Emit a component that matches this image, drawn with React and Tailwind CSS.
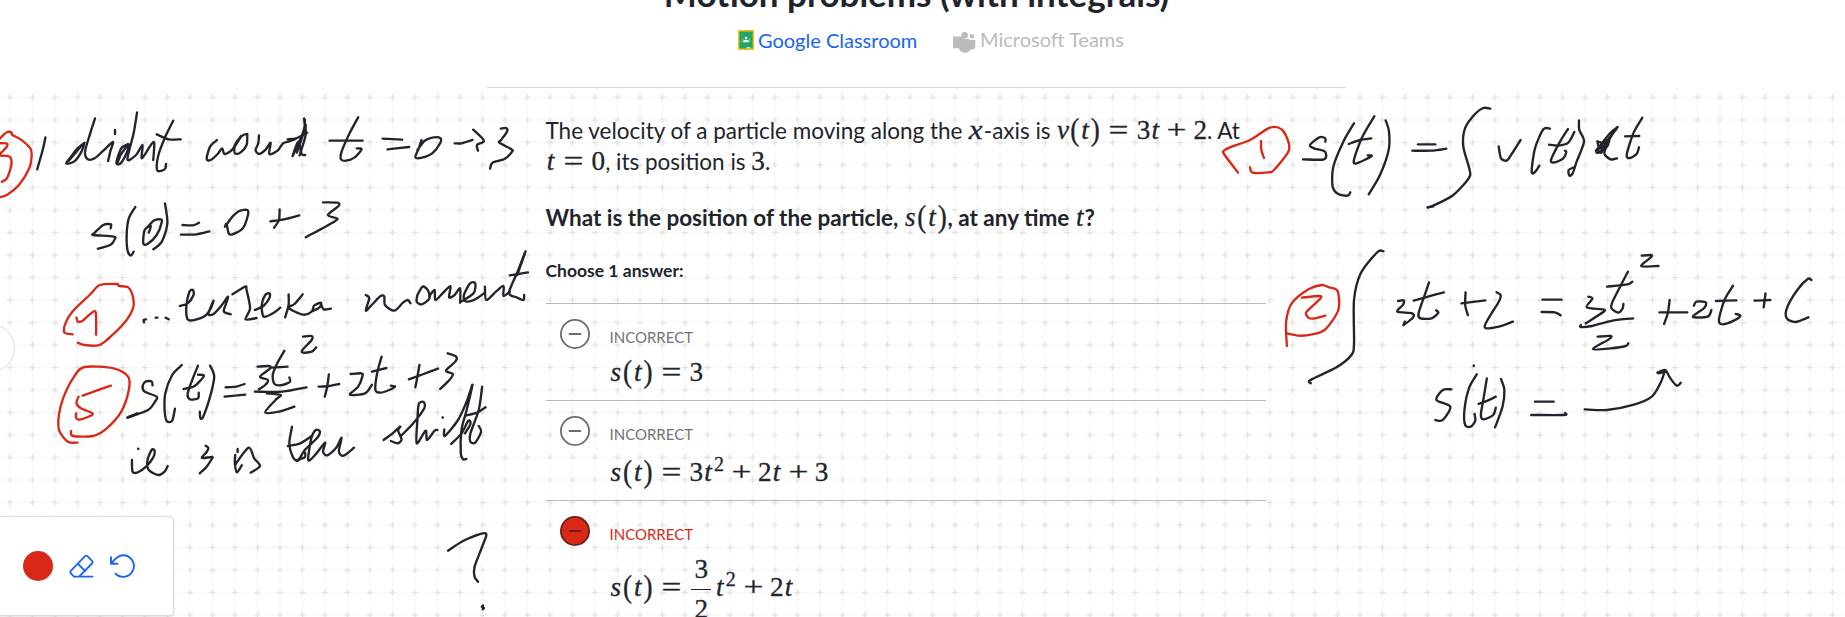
const INK = "#21242c";
const RED = "#d92916";

/* Each sheet holds pen strokes; a stroke is a list of sampled pen points. */
const SHEETS = [
  {
    transform: "translate(0 80) scale(0.34439 0.33333)",
    red: [
      "-8,185 0,175 20,157 33,157 36,165 60,178 88,205 92,225 85,265 55,315 20,345 -4,352",
      "-4,190 18,190 20,200 -2,224",
      "-4,227 28,230 33,255 20,295 5,305",
    ],
    ink: [
      "132,172 124,210 108,268",
      "246,188 225,205 208,228 192,250 215,245 235,218 244,190 222,215 200,242",
      "276,115 262,160 247,215 255,238 275,235 300,212 328,186 320,215 314,243",
      "334,150 334,162",
      "372,192 352,205 338,248 350,250 368,218 374,193 352,222 342,246",
      "398,97 388,160 370,238 395,225 414,195 412,235 440,192 448,190 445,240",
      "503,122 480,170 460,225 456,270 470,272 480,265 482,252",
      "455,163 490,178 525,178",
      "630,180 610,200 600,237 612,240 632,222 645,205 652,222 675,208 702,168 718,162",
      "700,168 682,195 682,220 698,218 716,195 718,163",
      "752,166 750,190 742,210 752,222 772,208 786,188 782,222 806,212 822,190 840,184 856,178",
      "883,115 888,160 878,200 870,226",
      "835,178 860,175 892,158",
      "885,118 882,150 850,228 866,185 876,222 886,225",
      "888,135 878,170 862,218",
      "1040,112 1015,160 992,215 990,238 1005,242 1030,232 1050,208 1036,205",
      "957,182 1053,182",
      "1111,176 1168,179",
      "1125,208 1188,201",
      "1224,180 1216,205 1206,232 1225,233 1255,220 1278,190 1278,174 1255,173 1232,183 1212,210",
      "1320,190 1340,190 1372,180",
      "1374,149 1405,182 1385,195 1388,212",
      "1454,146 1470,144 1472,155 1455,180 1450,188 1485,208 1487,215 1465,237 1430,248 1423,266",
      "321,445 322,433 300,435 273,460 272,465 330,470 333,478 320,495 284,506",
      "393,381 374,415 368,460 370,510 380,527 388,515",
      "432,458 438,438 420,450 416,490 428,492 455,465 470,425 465,418 446,422 428,442",
      "479,370 486,430 470,485 445,508",
      "530,435 560,436 578,428",
      "525,464 570,463 608,454",
      "653,440 658,432 664,460 675,463 705,445 720,405 718,390 695,393 675,410 658,434",
      "785,424 825,418 869,406",
      "812,388 810,420 796,443",
      "938,367 980,368 983,378 952,405 978,415 970,425 888,472",
    ],
  },
  {
    transform: "translate(0 240) scale(0.34439 0.33333)",
    red: [
      "211,283 187,278 190,250 210,215 260,165 290,135 340,132 345,138 372,142 386,170 386,205 360,250 310,300 285,316 245,315 226,308",
      "222,233 226,245 240,242 262,222 278,217 279,284",
      "225,608 197,605 172,572 171,525 185,470 215,410 245,381 330,385 372,410 374,450 352,515 310,565 270,588 212,588 206,573",
      "322,437 280,452 240,467",
      "228,470 222,490 235,505 266,518 266,526 232,539 221,534 221,520",
    ],
    ink: [
      "418,247 417,240 424,238",
      "452,233 457,233",
      "481,233 490,238",
      "522,198 545,190 562,165 560,150 550,155 541,200 545,238 565,240 595,228 612,205 620,182 605,222 620,222 642,198 662,170 655,195 650,215 670,223",
      "675,163 712,140 716,150 726,205 713,238 745,234",
      "740,210 765,198 782,175 783,160 770,165 760,195 766,230 795,218 814,203",
      "838,163 838,195 828,232",
      "879,163 855,192 838,204 880,224 905,215 912,197 932,188 928,202 906,214",
      "932,192 940,208 961,206",
      "1062,165 1072,175 1062,212 1082,192 1105,168 1116,170 1118,195 1145,212 1170,188 1184,180 1192,190",
      "1212,165 1210,185 1225,193 1247,175 1242,150 1227,140 1212,165",
      "1247,168 1262,150 1264,180 1285,160 1308,138 1304,172 1320,165 1336,145 1336,188",
      "1340,184 1375,160 1380,130 1365,130 1347,165 1352,184 1380,178 1408,158",
      "1408,140 1412,180 1440,155 1462,138 1462,168 1480,155",
      "1526,34 1505,90 1478,158 1500,172 1520,180 1522,165",
      "1524,40 1512,75 1502,105",
      "1480,106 1533,97",
      "880,290 905,288 905,300 878,330 880,338 905,335 918,322",
      "443,436 440,424 422,425 414,440 420,455 455,470 450,485 430,510 370,533",
      "398,520 384,527 370,533",
      "396,522 372,531",
      "528,375 500,405 480,460 478,510 484,543 500,542 508,506",
      "575,377 560,415 545,460 552,478 575,475 577,458",
      "533,447 565,438 592,408 575,404",
      "610,377 622,410 610,470 590,530 582,535 580,515",
      "655,442 685,440 710,432",
      "652,470 712,464",
      "748,380 780,378 785,385 755,410 778,420 770,435 752,448",
      "826,332 805,370 792,405 797,432 820,435 842,425 840,412",
      "790,383 835,380",
      "740,455 820,455 890,442",
      "775,460 815,465 800,480 770,517 810,515 855,500",
      "955,403 950,440 943,470",
      "925,440 955,438 985,432",
      "1018,402 1050,400 1052,410 1040,440 1016,464 1060,460 1080,434",
      "1108,350 1095,400 1090,450 1105,458 1130,450 1147,440 1135,437",
      "1080,395 1122,384",
      "1218,375 1212,410 1206,442",
      "1187,418 1230,402 1272,386",
      "1300,340 1325,350 1322,365 1295,392 1315,402 1305,420 1278,447",
    ],
  },
  {
    transform: "translate(0 400) scale(0.34439 0.33333)",
    red: [],
    ink: [
      "383,180 385,215 400,217 424,200 445,172 449,152 440,150 428,182 432,210 460,225 478,215 487,198",
      "401,146 402,147",
      "597,137 605,144 600,156 586,174 616,171 613,180 600,200 580,220",
      "690,147 690,156",
      "683,165 682,190 688,217 702,196",
      "684,192 722,143 738,175 755,198 728,218",
      "848,80 840,130 850,170 865,182 885,150 920,115 929,95 917,90 904,115 895,180 915,165 944,128 938,155 950,166 975,145 992,113 984,155 998,167 1028,143",
      "836,138 870,131 905,108",
      "862,180 885,172 886,158",
      "1114,120 1140,100 1162,80 1156,92 1166,118 1155,130 1135,123",
      "1166,106 1200,70 1232,25 1230,6 1216,12 1212,60 1210,130 1236,92 1240,120 1262,92 1270,90",
      "1285,52 1286,53",
      "1290,88 1292,108 1330,60 1355,5 1372,-46 1355,30 1340,90 1338,160 1345,178 1354,177",
      "1310,132 1340,100 1360,62 1366,72 1350,100",
      "1400,-40 1390,30 1366,100 1366,125 1380,128 1397,95 1390,78",
      "1355,46 1385,38 1410,22",
      "1301,452 1350,420 1410,400 1400,440 1378,500 1378,530 1388,545",
      "1402,616 1402,628",
      "1399,620 1405,624",
    ],
  },
  {
    transform: "translate(1200 80) scale(0.33333)",
    red: [
      "114,278 72,222 72,212 95,200 150,180 210,143 245,148 265,185 265,215 222,270 205,277 158,278 150,262",
      "183,183 184,210 192,234",
    ],
    ink: [
      "376,185 376,175 358,172 330,195 342,205 375,215 372,238 309,238",
      "462,130 430,185 400,260 398,320 415,342 443,347 451,337",
      "523,109 485,175 461,245 480,246 515,228 503,226",
      "446,192 480,180 514,175",
      "557,121 567,155 566,210 540,285 506,343",
      "654,193 706,193",
      "637,212 695,212 739,206",
      "871,86 850,84 825,102 795,145 790,200 809,270 806,295 760,345 700,377 683,382",
      "700,379 683,382",
      "896,199 903,235 920,242 930,230 962,180",
      "1050,146 1030,148 1005,205 995,275 1005,276 1018,257",
      "1104,147 1080,185 1053,240 1065,247 1090,235 1099,216 1095,212",
      "1047,194 1075,197 1105,188 1123,156",
      "1137,121 1138,150 1152,185 1130,245 1118,280 1108,287 1106,270 1122,262",
      "1253,141 1230,160 1190,212 1200,216 1225,185 1213,220 1232,238 1251,235",
      "1250,146 1222,182 1205,217 1195,208 1218,180 1188,212",
      "1192,184 1200,205 1228,182 1208,210",
      "1196,186 1225,192 1212,206 1245,150",
      "1327,113 1300,160 1280,225 1290,234 1310,222 1317,202",
      "1275,169 1318,168",
    ],
  },
  {
    transform: "translate(1260 230) scale(0.37309 0.33333)",
    red: [
      "72,348 70,275 85,220 130,178 165,165 185,172 208,183 210,240 175,298 140,313 105,317 73,310",
      "112,203 160,198 160,208 125,245 127,260 140,266 175,257",
    ],
    ink: [
      "331,64 315,66 270,130 252,210 252,340 245,375 205,412 135,450 136,460",
      "370,213 385,211 383,225 368,245 408,250 410,263 385,285",
      "388,275 385,285",
      "453,157 440,200 425,250 430,265 460,265 478,248 472,241",
      "412,212 450,200 493,187",
      "551,187 550,225 557,255",
      "540,220 604,211",
      "634,187 645,195 640,215 602,290 640,290 678,275",
      "757,209 808,209",
      "755,246 790,247 806,256",
      "880,200 891,206 876,232 920,238 920,246 873,280",
      "986,125 970,160 945,215 942,235 960,248 972,235 974,222",
      "930,170 985,163 998,155",
      "860,285 860,291 890,288 945,272 1000,265",
      "905,320 940,318 935,328 892,357 940,355 980,348 987,340",
      "1023,77 1048,75 1048,82 1022,108 1068,108",
      "1098,210 1093,250 1083,282",
      "1071,247 1145,247",
      "1163,227 1170,215 1195,217 1190,235 1160,260 1200,260 1210,240",
      "1268,167 1245,210 1230,270 1240,283 1270,272 1288,257 1275,252",
      "1222,213 1277,211",
      "1355,190 1350,232",
      "1325,212 1368,210",
      "1478,150 1468,147 1440,180 1412,235 1412,265 1435,276 1470,262",
      "513,478 490,480 473,510 510,530 490,570 470,570",
      "581,433 560,475 548,540 550,585 565,590 577,572 575,552",
      "573,406 573,408",
      "608,445 600,500 592,555 600,568 625,555 632,533",
      "586,522 610,512 632,500",
      "646,447 655,480 650,530 630,592",
      "737,515 787,515",
      "727,555 815,555 818,549",
      "870,538 930,540 1000,525 1050,500 1075,455 1085,422",
      "1065,428 1080,421 1088,422 1100,445 1117,467 1128,458",
      "1068,430 1085,426",
    ],
  },
];

/* Rounds a list of pen points into a smooth Catmull-Rom curve. */
function smooth(points) {
  const p = points.split(" ").map((s) => s.split(",").map(Number));
  const k = 7;
  let d = `M${p[0][0]} ${p[0][1]}`;
  for (let i = 0; i < p.length - 1; i++) {
    const a = p[i - 1] || p[i];
    const b = p[i];
    const c = p[i + 1];
    const e = p[i + 2] || c;
    d += `C${b[0] + (c[0] - a[0]) / k} ${b[1] + (c[1] - a[1]) / k} ${c[0] - (e[0] - b[0]) / k} ${c[1] - (e[1] - b[1]) / k} ${c[0]} ${c[1]}`;
  }
  return d;
}

function Strokes({ list, color }) {
  return list.map((s, i) => (
    <path key={i} d={smooth(s)} stroke={color} vectorEffect="non-scaling-stroke" />
  ));
}

function Whiteboard() {
  return (
    <svg
      className="pointer-events-none absolute inset-0"
      width="1845"
      height="617"
      fill="none"
      strokeWidth="2.35"
      strokeLinecap="round"
      strokeLinejoin="round"
    >
      {SHEETS.map((s, i) => (
        <g key={i} transform={s.transform}>
          <Strokes list={s.ink} color={INK} />
          <Strokes list={s.red} color={RED} />
        </g>
      ))}
    </svg>
  );
}

function Grid() {
  return (
    <svg className="absolute inset-x-0 top-[87px]" width="1845" height="530">
      <defs>
        <pattern id="grid" x="-1.25" y="-0.75" width="22.5" height="22.5" patternUnits="userSpaceOnUse">
          <path d="M0 11.25H22.5M11.25 0V22.5" stroke="#f1f1f1" strokeWidth="1.2" strokeDasharray="1.25 1.25" />
          <path d="M8.25 11.25h6M11.25 8.25v6" stroke="#e4e4e4" strokeWidth="1.6" />
        </pattern>
      </defs>
      <rect width="1845" height="530" fill="url(#grid)" />
    </svg>
  );
}

/* Advance widths of the math glyphs, in em. */
const GLYPHS = {
  s: "w-[0.469em] italic",
  t: "w-[0.361em] italic",
  v: "w-[0.485em] italic",
  x: "w-[0.572em] italic scale-x-115",
  "(": "w-[0.389em] scale-y-115",
  ")": "w-[0.389em] scale-y-115",
  "=": "w-[0.778em] mx-[0.278em] scale-x-130",
  "+": "w-[0.778em] mx-[0.222em] scale-x-130",
};

function Math({ children }) {
  return (
    <span className="inline-flex items-baseline whitespace-nowrap font-['Liberation_Serif',serif] text-[27.2px] leading-[0] font-normal [-webkit-text-stroke:0.3px]">
      {[...children].map((c, i) =>
        c === "²" ? (
          <span key={i} className="relative -top-[10px] w-3 pl-px text-[20px]">2</span>
        ) : c === "½" ? (
          <span key={i} className="relative -top-[17.5px] mr-1 ml-0.5 inline-flex h-[22px] w-[19.5px] flex-col items-center leading-[22px]">
            <span>3</span>
            <span className="mt-[9px] h-px w-full shrink-0 bg-[#21242c]" />
            <span className="mt-2">2</span>
          </span>
        ) : (
          <span key={i} className={`flex shrink-0 justify-center ${GLYPHS[c] || "w-[0.5em]"}`}>{c}</span>
        )
      )}
    </span>
  );
}

function Option({ height, selected, gap, children }) {
  return (
    <li className={`flex shrink-0 border-t border-[#b8b9bd] pl-3.5 ${height}`}>
      <svg className="mt-[15px] mr-5 shrink-0" width="30" height="30" viewBox="0 0 30 30">
        <circle
          cx="15"
          cy="15"
          r="14.1"
          fill={selected ? "#d92916" : "#fff"}
          stroke={selected ? "#6b221e" : "#6b6c72"}
          strokeWidth="1.8"
        />
        <path d="M9.7 15H20.3" stroke={selected ? "#6b221e" : "#6b6c72"} strokeWidth="2.2" strokeLinecap="round" />
      </svg>
      <div className="pt-6">
        <div className={`text-[15px] leading-[18px] ${selected ? "text-[#d92916]" : "text-[#717378]"}`}>INCORRECT</div>
        <div className={`h-[30px] text-[22.5px] leading-[30px] ${gap}`}>
          <Math>{children}</Math>
        </div>
      </div>
    </li>
  );
}

function ClassroomIcon() {
  return (
    <svg width="16" height="20" viewBox="0 0 16 20">
      <rect width="16" height="20" fill="#f6bb17" />
      <rect x="1.4" y="1.6" width="13.2" height="16.8" fill="#23a566" />
      <circle cx="8" cy="8" r="1.2" fill="#fff" />
      <path d="M5 12.2c0-1.600 1.400-2.400 3-2.400s3 .8 3 2.400z" fill="#fff" />
      <path d="M3.400 11.800a1.500 1.200 0 0 1 2.200-1M12.600 11.800a1.500 1.200 0 0 0-2.200-1" stroke="#8fd1b0" fill="none" />
      <circle cx="4.700" cy="9.300" r=".7" fill="#8fd1b0" />
      <circle cx="11.300" cy="9.300" r=".7" fill="#8fd1b0" />
      <rect x="8.600" y="17.200" width="4" height="1.200" fill="#f3f3e2" />
    </svg>
  );
}

function TeamsIcon() {
  return (
    <svg width="23" height="21" viewBox="0 0 23 21" fill="#babbbd">
      <circle cx="11.700" cy="3.300" r="3.300" />
      <circle cx="18.900" cy="4.200" r="2.300" />
      <path d="M0 4.600h9c1 2.800 4.400 3.400 6.200 1.700.5 1.200 1.200 1.700 2.200 1.700H22.300v6.500c0 2.200-2 3.300-4.600 2.900-1.200 2.200-3.200 3.300-5.700 3.300-3 0-5.100-1.500-6.200-4.400H0z" />
    </svg>
  );
}

function Header() {
  return (
    <header className="relative h-[88px] bg-white">
      <div className="ml-[487px] flex h-full w-[859px] flex-col items-center border-b border-[#d5d6d8]">
        <h1 className="-mt-[28px] h-[42px] text-[35px] leading-[42px] font-bold whitespace-nowrap">
          Motion problems (with integrals)
        </h1>
        <div className="mt-[13px] flex w-full text-[20px] leading-6">
          <a className="ml-[251px] flex w-[215px] text-[#1865f2]">
            <span className="mt-[3px] mr-1"><ClassroomIcon /></span>
            <span className="mt-[1px]">Google Classroom</span>
          </a>
          <a className="flex text-[#babbbd]">
            <span className="mt-[5px] mr-1"><TeamsIcon /></span>
            <span>Microsoft Teams</span>
          </a>
        </div>
      </div>
    </header>
  );
}

function Toolbar() {
  return (
    <div className="absolute top-[516px] left-[-6px] flex h-[100px] w-[180px] items-center gap-[15.500px] rounded border border-[#dcdde0] bg-white pl-[28px] shadow-sm">
      <span className="size-[30px] shrink-0 rounded-full bg-[#d92916]" />
      <svg width="25" height="24" viewBox="0 0 25 24" fill="none" stroke="#1865f2" strokeWidth="1.8" strokeLinejoin="round" strokeLinecap="round">
        <path d="M5 22.600 1.800 19.400Q.8 18 1.800 16.800L16 2.200q1.200-1.200 2.400 0l4.600 4.700q1.200 1.300 0 2.600L10 22.600M5 22.600H23.600M8.800 9.700l7.400 7.400" />
      </svg>
      <svg width="26" height="24" viewBox="0 0 26 24" fill="none" stroke="#1865f2" strokeWidth="1.900" strokeLinejoin="round" strokeLinecap="round">
        <path d="M2 3.200V9.800H8.600M2.400 9.400C6.200 4.200 9.200 1.200 14 1.200a10.800 10.800 0 1 1-7.600 18.400" />
      </svg>
    </div>
  );
}

export default function App() {
  return (
    <div className="relative h-[617px] w-[1845px] overflow-hidden bg-white font-[Lato,sans-serif] text-[#21242c]">
      <Grid />
      <Header />
      <main className="relative ml-[545.500px] flex w-[720px] flex-col">
        <div className="mt-[26.500px] text-[22.500px] leading-[31.500px] whitespace-nowrap">
          <p className="h-[31.500px]">The velocity of a particle moving along the <Math>x</Math>-axis is <Math>v(t)=3t+2</Math>. At</p>
          <p className="h-[31.500px]"><Math>t=0</Math>, its position is <Math>3</Math>.</p>
          <p className="mt-6 h-[31.500px] font-bold">What is the position of the particle, <Math>s(t)</Math>, at any time <Math>t</Math>?</p>
        </div>
        <div className="mt-[26.500px] text-[17.500px] leading-[22px] font-bold">Choose 1 answer:</div>
        <ul className="mt-[21.500px]">
          <Option height="h-[97px]" gap="mt-[11.500px]">s(t)=3</Option>
          <Option height="h-[100px]" gap="mt-[15px]">s(t)=3t²+2t+3</Option>
          <Option height="h-[140px]" gap="mt-[29.500px]" selected>s(t)=½t²+2t</Option>
        </ul>
      </main>
      <div className="absolute top-[324px] left-[-33px] size-[48px] rounded-full border border-[#dcdde0] bg-white" />
      <Toolbar />
      <Whiteboard />
    </div>
  );
}
